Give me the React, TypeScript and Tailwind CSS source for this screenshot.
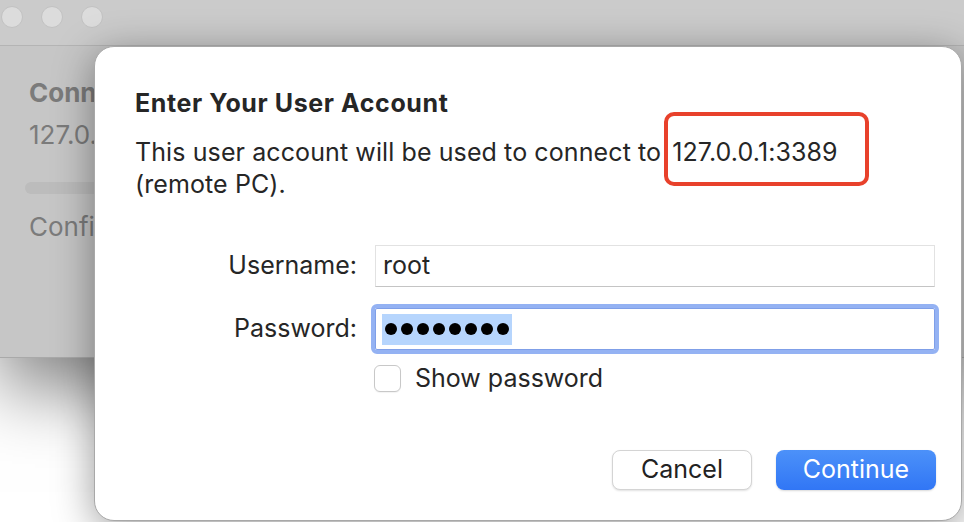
import React from 'react';

const FONT = { fontFamily: 'Inter, "Noto Sans", "Liberation Sans", sans-serif' };

function TrafficLight() {
  return <span className="w-[22px] h-[22px] rounded-full bg-[#dcdcdc] border border-[#c2c2c2]" />;
}

function BackgroundWindow() {
  return (
    <div className="h-[358px] bg-[#c6c6c6] border-b border-[#a9a9a9] shadow-[0_30px_70px_rgba(0,0,0,0.5)] flex flex-col">
      <div className="h-[46px] bg-[#cbcbcb] border-b border-[#b4b4b4] flex items-center gap-[18px] pl-[1px] pb-[12px]">
        <TrafficLight />
        <TrafficLight />
        <TrafficLight />
      </div>
      <div className="pl-[29px] pt-[30px] text-[#7b7b7b]">
        <div className="text-[26px] font-bold leading-[34px]">Connecting</div>
        <div className="text-[26px] leading-[34px] mt-[8px]">127.0.0.1:3389</div>
        <div className="mt-[30px] -ml-[4px] h-[12px] w-[300px] rounded-full bg-[#bcbcbc]" />
        <div className="text-[26px] leading-[34px] mt-[16px]">Configuring remote PC...</div>
      </div>
    </div>
  );
}

function PasswordDots({ count }: { count: number }) {
  return (
    <span className="flex items-center gap-[4px] h-[31px] bg-[#b6d5fd] pl-[3px] pr-[3px]">
      {Array.from({ length: count }).map((_, i) => (
        <span key={i} className="w-[12px] h-[12px] rounded-full bg-black" />
      ))}
    </span>
  );
}

function Sheet() {
  return (
    <div className="absolute left-[94px] top-[46px] w-[868px] h-[475px] bg-white rounded-[20px] border border-[#a8a8a8] shadow-[0_8px_40px_rgba(0,0,0,0.4)] flex flex-col text-[#262626]">
      {/* header text */}
      <div className="pl-[40px] pt-[41px]">
        <h1 className="text-[25px] font-bold leading-[30px] tracking-[0.6px]">Enter Your User Account</h1>
        <p className="text-[25px] leading-[32px] mt-[18px] tracking-[0.1px]">
          This user account will be used to connect to<span className="ml-[11px]">127.0.0.1:3389</span>
          <br />
          (remote PC).
        </p>
      </div>

      {/* annotation */}
      <div className="absolute left-[569px] top-[65px] w-[205px] h-[74px] border-[4px] border-[#e8412b] rounded-[10px]" />

      {/* form */}
      <div className="mt-[45px] flex flex-col">
        <div className="flex items-center">
          <label className="w-[262px] text-right text-[25px]">Username:</label>
          <div className="ml-[18px] w-[560px] h-[42px] border border-[#e2e2e2] border-b-[#c4c4c4] flex items-center pl-[7px] text-[25px]">
            root
          </div>
        </div>
        <div className="flex items-center mt-[21px]">
          <label className="w-[262px] text-right text-[25px]">Password:</label>
          <div className="ml-[18px] w-[560px] h-[42px] border border-[#7f9fe8] outline-[4px] outline-solid outline-[#94b2f3] rounded-[2px] flex items-center pl-[6px]">
            <PasswordDots count={8} />
          </div>
        </div>
        <div className="flex items-center mt-[14px] ml-[279px]">
          <span className="w-[27px] h-[27px] rounded-[6px] border border-[#c8c8c8] bg-white shadow-[0_1px_1px_rgba(0,0,0,0.05)]" />
          <span className="ml-[14px] text-[25px] leading-[28px]">Show password</span>
        </div>
      </div>

      {/* buttons */}
      <div className="mt-auto pb-[30px] pr-[25px] flex justify-end gap-[24px]">
        <button className="w-[140px] h-[40px] rounded-[8px] bg-white border border-[#d4d4d4] shadow-[0_1px_2px_rgba(0,0,0,0.12)] text-[25px] text-[#222]">
          Cancel
        </button>
        <button className="w-[160px] h-[40px] rounded-[8px] bg-gradient-to-b from-[#4c91f9] to-[#3176f5] text-[25px] text-white shadow-[0_1px_2px_rgba(0,0,0,0.15)]">
          Continue
        </button>
      </div>
    </div>
  );
}

export default function App() {
  return (
    <div className="relative w-[964px] h-[522px] overflow-hidden bg-white" style={FONT}>
      <BackgroundWindow />
      <Sheet />
    </div>
  );
}
